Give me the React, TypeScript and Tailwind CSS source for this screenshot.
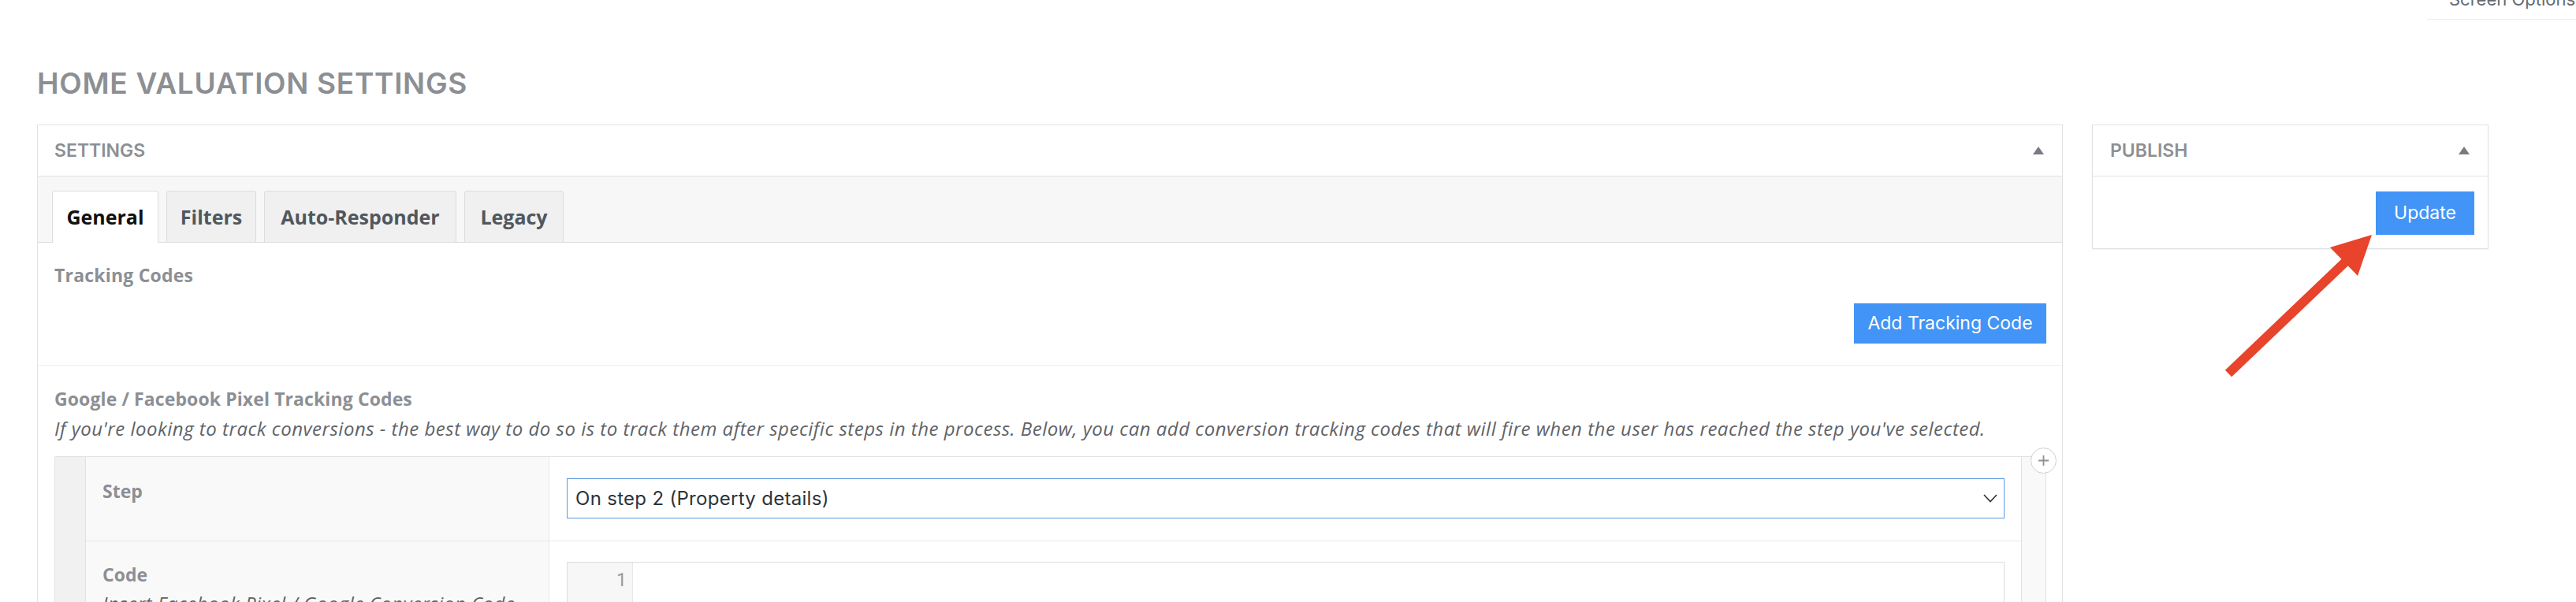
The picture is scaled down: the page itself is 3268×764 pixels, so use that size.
import React from "react";

function Tri() {
  return (
    <svg width="14" height="10" viewBox="0 0 14 10" className="block">
      <polygon points="7,0 14,10 0,10" fill="#787c82" />
    </svg>
  );
}

const tabs = [
  { label: "General", w: "w-[135px]", active: true },
  { label: "Filters", w: "w-[114px]", active: false },
  { label: "Auto-Responder", w: "w-[244px]", active: false },
  { label: "Legacy", w: "w-[126px]", active: false },
];

export default function App() {
  return (
    <div className="relative flex h-[764px] w-[3268px] flex-col overflow-hidden bg-white font-['Open_Sans',sans-serif]">
      {/* Screen options */}
      <div className="flex h-[25px] shrink-0 justify-end overflow-hidden">
        <div className="w-[189px] border-b border-[#ececec] pl-[28px]">
          <div className="-mt-[13px] whitespace-nowrap font-['Inter',sans-serif] text-[22px] leading-[24px] text-[#646970]">
            Screen Options
          </div>
        </div>
      </div>

      <div className="flex flex-col pl-[47px] pr-[111px]">
        <h1 className="mt-[62px] mb-[34px] whitespace-nowrap font-['Inter',sans-serif] text-[37px] font-semibold leading-[37px] tracking-[0.7px] text-[#8c8f94]">
          HOME VALUATION SETTINGS
        </h1>

        <div className="flex items-start gap-[37px]">
          {/* Settings panel */}
          <div className="flex-1 border border-[#e2e2e2] bg-white">
            <div className="flex h-[65px] items-center justify-between border-b border-[#e2e2e2] pl-[21px] pr-[23px]">
              <span className="font-['Inter',sans-serif] text-[23px] font-semibold leading-[23px] text-[#8c8f94]">
                SETTINGS
              </span>
              <Tri />
            </div>

            {/* tabs */}
            <div className="flex h-[84px] items-end gap-[10px] border-b border-[#dcdcde] bg-[#f7f7f7] pl-[18px]">
              {tabs.map((t) =>
                t.active ? (
                  <div
                    key={t.label}
                    className={`${t.w} -mb-px flex h-[66px] items-center justify-center rounded-t-[4px] border border-b-0 border-[#dcdcde] bg-white text-[25px] font-bold leading-[25px] text-[#111111]`}
                  >
                    {t.label}
                  </div>
                ) : (
                  <div
                    key={t.label}
                    className={`${t.w} flex h-[65px] items-center justify-center rounded-t-[4px] border border-b-0 border-[#dcdcde] bg-[#f0f0f0] text-[25px] font-bold leading-[25px] text-[#50575e]`}
                  >
                    {t.label}
                  </div>
                )
              )}
            </div>

            {/* Tracking codes */}
            <div className="border-b border-[#eeeeee] pl-[21px] pr-[20px] pt-[30px] pb-[27px]">
              <div className="h-[24px] text-[23px] font-bold leading-[23px] tracking-[0.2px] text-[#8c8f94]">Tracking Codes</div>
              <div className="mt-[23px] flex justify-end">
                <button className="flex h-[51px] w-[244px] items-center justify-center bg-[#4294f6] font-['Inter',sans-serif] text-[23px] leading-[23px] text-white">
                  Add Tracking Code
                </button>
              </div>
            </div>

            {/* Pixel tracking codes */}
            <div className="pl-[21px] pr-[20px] pt-[31px] pb-[40px]">
              <div className="h-[24px] text-[23px] font-bold leading-[23px] tracking-[0.1px] text-[#8c8f94]">
                Google / Facebook Pixel Tracking Codes
              </div>
              <div className="mt-[13px] h-[24px] whitespace-nowrap text-[24px] italic leading-[24px] tracking-[0.5px] text-[#5f6368]">
                If you're looking to track conversions - the best way to do so is to track them after specific steps in the process. Below, you can add conversion tracking codes that will fire when the user has reached the step you've selected.
              </div>

              <div className="relative mt-[23px] flex border border-[#e1e1e1]">
                <div className="w-[39px] shrink-0 border-r border-[#e1e1e1] bg-[#f1f1f1]" />
                <div className="flex flex-1 flex-col">
                  {/* Row 1 */}
                  <div className="flex h-[107px] border-b border-[#e8e8e8]">
                    <div className="w-[588px] shrink-0 border-r border-[#e8e8e8] bg-[#f9f9f9] pl-[21px] pt-[32px]">
                      <div className="text-[23px] font-bold leading-[23px] text-[#8c8f94]">Step</div>
                    </div>
                    <div className="flex-1 pl-[22px] pr-[21px] pt-[27px]">
                      <div className="flex h-[51px] items-center justify-between border border-[#5b9ae0] bg-white pl-[10px] pr-[8px]">
                        <span className="font-['Inter',sans-serif] text-[24px] leading-[24px] tracking-[0.3px] text-[#2c3338]">
                          On step 2 (Property details)
                        </span>
                        <svg width="18" height="11" viewBox="0 0 18 11" className="block">
                          <polyline points="1,1 9,9.5 17,1" fill="none" stroke="#2c3338" strokeWidth="1.6" />
                        </svg>
                      </div>
                    </div>
                  </div>
                  {/* Row 2 */}
                  <div className="flex h-[240px]">
                    <div className="w-[588px] shrink-0 border-r border-[#e8e8e8] bg-[#f9f9f9] pl-[21px] pt-[31px]">
                      <div className="text-[23px] font-bold leading-[23px] text-[#8c8f94]">Code</div>
                      <div className="mt-[13px] whitespace-nowrap text-[24px] italic leading-[24px] tracking-[0.5px] text-[#5f6368]">
                        Insert Facebook Pixel / Google Conversion Code
                      </div>
                    </div>
                    <div className="flex-1 pl-[22px] pr-[21px] pt-[26px]">
                      <div className="flex h-[200px] border border-[#dddddd]">
                        <div className="w-[83px] border-r border-[#e8e8e8] bg-[#f7f7f7] pr-[7px] pt-[11px] text-right font-['Roboto',sans-serif] text-[23px] leading-[23px] text-[#999999]">
                          1
                        </div>
                        <div className="flex-1 bg-white" />
                      </div>
                    </div>
                  </div>
                </div>
                <div className="w-[31px] shrink-0 border-l border-[#e1e1e1] bg-[#f9f9f9]" />
                <div className="absolute -right-[14px] -top-[12px] flex h-[33px] w-[33px] items-center justify-center rounded-full border border-[#cfcfcf] bg-white">
                  <svg width="15" height="15" viewBox="0 0 15 15" className="block">
                    <path d="M7.5 1v13M1 7.5h13" stroke="#8c8f94" strokeWidth="1.8" />
                  </svg>
                </div>
              </div>
            </div>
          </div>

          {/* Publish panel */}
          <div className="w-[503px] shrink-0 border border-[#e2e2e2] bg-white shadow-[0_1px_2px_rgba(0,0,0,0.05)]">
            <div className="flex h-[65px] items-center justify-between border-b border-[#e2e2e2] pl-[22px] pr-[23px]">
              <span className="font-['Inter',sans-serif] text-[23px] font-semibold leading-[23px] text-[#8c8f94]">
                PUBLISH
              </span>
              <Tri />
            </div>
            <div className="flex justify-end pt-[19px] pb-[17px] pr-[17px]">
              <button className="flex h-[55px] w-[125px] items-center justify-center bg-[#4294f6] font-['Inter',sans-serif] text-[23px] leading-[23px] text-white">
                Update
              </button>
            </div>
          </div>
        </div>
      </div>

      {/* annotation arrow */}
      <svg
        className="pointer-events-none absolute left-[2800px] top-[280px]"
        width="230"
        height="210"
        viewBox="0 0 230 210"
      >
        <line x1="27" y1="194" x2="180" y2="48" stroke="#e8432b" strokeWidth="12" />
        <polygon points="209,18 156,34 191,70" fill="#e8432b" />
      </svg>
    </div>
  );
}
